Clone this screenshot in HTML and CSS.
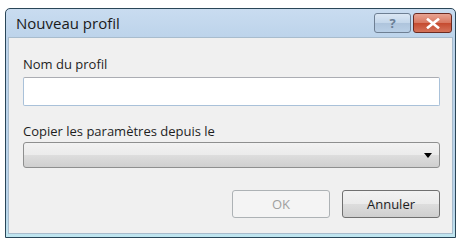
FILE: index.html
```html
<!DOCTYPE html>
<html lang="fr">
<head>
    <meta charset="UTF-8">
    <title>Nouveau profil</title>
    <link rel="stylesheet" href="styles.css">
</head>
<body>
    <div class="window">
        <div class="titlebar">
            <span class="title">Nouveau profil</span>
            <div class="caption-btns">
                <div class="cap-btn help">?</div>
                <div class="cap-btn close">
                    <svg width="14" height="11" viewBox="0 0 14 11">
                        <path d="M2 1.5 L12 9.5 M12 1.5 L2 9.5" stroke="#fff" stroke-width="2.6" stroke-linecap="square"/>
                    </svg>
                </div>
            </div>
        </div>
        <div class="content">
            <label class="lbl">Nom du profil</label>
            <div class="textbox"></div>
            <label class="lbl">Copier les paramètres depuis le</label>
            <div class="combo">
                <svg width="8" height="5" viewBox="0 0 8 5"><path d="M0 0 H8 L4 5 Z" fill="#000"/></svg>
            </div>
            <div class="buttons">
                <div class="btn disabled">OK</div>
                <div class="btn">Annuler</div>
            </div>
        </div>
    </div>
</body>
</html>
```

FILE: styles.css
```css
body {
    margin: 0;
    background-color: #fff;
    font-family: "Open Sans", "Noto Sans", sans-serif;
    font-size: 13px;
    color: #1e1e1e;
}

.window {
    margin: 8px 0 0 5px;
    width: 445px;
    height: 225px;
    border: 1px solid #2a4658;
    background: linear-gradient(#c9dcf0, #bcd3ea 30px, #b9d4ea 200px, #bfe6f0);
    display: flex;
    flex-direction: column;
    padding: 0 2px 3px 2px;
    border-radius: 5px 5px 0 0;
}

.titlebar {
    height: 28px;
    display: flex;
    align-items: center;
    justify-content: space-between;
    position: relative;
}

.title {
    font-size: 15px;
    padding-left: 8px;
    color: #1a1a1a;
}

.caption-btns {
    display: flex;
    gap: 2px;
    align-self: flex-start;
    margin-top: 4px;
    margin-right: 1px;
}

.cap-btn {
    height: 18px;
    border: 1px solid #6e7f93;
    border-radius: 3px;
    display: flex;
    align-items: center;
    justify-content: center;
}

.help {
    width: 35px;
    background: linear-gradient(#dbe7f4, #c3d6ea 50%, #aec4dc 51%, #b9cfe6);
    color: #6a7e96;
    font-weight: bold;
    font-size: 13px;
}

.close {
    width: 37px;
    border-color: #6b2b22;
    background: linear-gradient(#e8a392, #d87760 50%, #c54a2f 51%, #d5735a);
}

.content {
    flex: 1;
    background-color: #f0f0f0;
    border: 1px solid #a8bccd;
    padding: 17px 12px 0 14px;
    display: flex;
    flex-direction: column;
}

.lbl {
    display: block;
    height: 18px;
    line-height: 18px;
}

.textbox {
    margin-top: 4px;
    height: 27px;
    border: 1px solid #a9c1d9;
    border-top-color: #abadb3;
    border-radius: 2px;
    background-color: #fff;
    margin-bottom: 16px;
}

.combo {
    margin-top: 2px;
    height: 24px;
    border: 1px solid #8e8f8f;
    border-radius: 3px;
    background: linear-gradient(#f2f2f2, #ebebeb 50%, #dddddd 51%, #cfcfcf);
    display: flex;
    align-items: center;
    justify-content: flex-end;
    padding-right: 7px;
}

.buttons {
    display: flex;
    justify-content: flex-end;
    gap: 12px;
    margin-top: 22px;
}

.btn {
    width: 96px;
    height: 26px;
    border: 1px solid #707070;
    border-radius: 3px;
    background: linear-gradient(#f2f2f2, #ebebeb 50%, #dddddd 51%, #cfcfcf);
    display: flex;
    align-items: center;
    justify-content: center;
}

.btn.disabled {
    border-color: #adb2b5;
    background: #f4f4f4;
    color: #a0a0a0;
}
```
